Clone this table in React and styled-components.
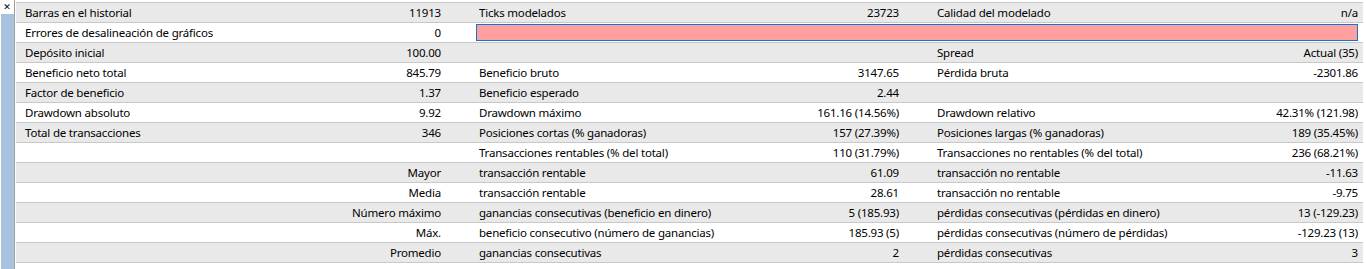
import React from 'react';
import styled, { createGlobalStyle } from 'styled-components';

const GlobalStyle = createGlobalStyle`
  html, body { margin: 0; padding: 0; background: #ffffff; }
  body { font-family: "Noto Sans", "Open Sans", sans-serif; }
`;

const Window = styled.div`
  display: flex;
  width: 1366px;
  height: 269px;
  overflow: hidden;
  background: #ffffff;
`;

const Side = styled.div`
  display: flex;
  flex-direction: column;
  width: 14px;
  flex: none;
  border-right: 1px solid #a0a0a0;
`;

const Close = styled.div`
  height: 14px;
  display: flex;
  align-items: center;
  justify-content: center;
  font-family: "DejaVu Sans", sans-serif;
  font-weight: bold;
  font-size: 9px;
  color: #000;
  line-height: 1;
`;

const Strip = styled.div`
  flex: 1;
  margin-left: 1px;
  background: #a8c3df;
`;

const Report = styled.div`
  flex: none;
  width: 1347px;
  margin-left: 1px;
  padding-top: 2px;
`;

const Row = styled.div`
  display: grid;
  grid-template-columns: 234px 224px 226px 232px 238px 192px;
  height: 19px;
  border-top: 1px solid #c8c8c8;
  background: ${p => (p.$alt ? '#e9e9e9' : '#ffffff')};
  &:last-child { border-bottom: 1px solid #c8c8c8; }
  font-size: 11.5px;
  letter-spacing: -0.2px;
  color: #000;
  align-items: center;
`;

const Label = styled.div`
  padding-left: ${p => p.$pad || 5}px;
  white-space: nowrap;
  overflow: visible;
`;

const Value = styled.div`
  text-align: right;
  white-space: nowrap;
  padding-right: ${p => p.$pad}px;
`;

const Warn = styled.div`
  grid-column: 3 / 7;
  height: 15px;
  margin: 0 4px 0 2px;
  background: #ff9f9f;
  border: 1px solid #0a78d4;
`;

const rows = [
  ['Barras en el historial', '11913', 'Ticks modelados', '23723', 'Calidad del modelado', 'n/a'],
  ['Errores de desalineación de gráficos', '0', null],
  ['Depósito inicial', '100.00', '', '', 'Spread', 'Actual (35)'],
  ['Beneficio neto total', '845.79', 'Beneficio bruto', '3147.65', 'Pérdida bruta', '-2301.86'],
  ['Factor de beneficio', '1.37', 'Beneficio esperado', '2.44', '', ''],
  ['Drawdown absoluto', '9.92', 'Drawdown máximo', '161.16 (14.56%)', 'Drawdown relativo', '42.31% (121.98)'],
  ['Total de transacciones', '346', 'Posiciones cortas (% ganadoras)', '157 (27.39%)', 'Posiciones largas (% ganadoras)', '189 (35.45%)'],
  ['', '', 'Transacciones rentables (% del total)', '110 (31.79%)', 'Transacciones no rentables (% del total)', '236 (68.21%)'],
  ['', 'Mayor', 'transacción rentable', '61.09', 'transacción no rentable', '-11.63'],
  ['', 'Media', 'transacción rentable', '28.61', 'transacción no rentable', '-9.75'],
  ['', 'Número máximo', 'ganancias consecutivas (beneficio en dinero)', '5 (185.93)', 'pérdidas consecutivas (pérdidas en dinero)', '13 (-129.23)'],
  ['', 'Máx.', 'beneficio consecutivo (número de ganancias)', '185.93 (5)', 'pérdidas consecutivas (número de pérdidas)', '-129.23 (13)'],
  ['', 'Promedio', 'ganancias consecutivas', '2', 'pérdidas consecutivas', '3'],
];

export default function App() {
  return (
    <Window>
      <GlobalStyle />
      <Side>
        <Close>✕</Close>
        <Strip />
      </Side>
      <Report>
        {rows.map((r, i) => (
          <Row key={i} $alt={i % 2 === 0}>
            <Label $pad={9}>{r[0]}</Label>
            <Value $pad={33}>{r[1]}</Value>
            {r[2] === null ? (
              <Warn />
            ) : (
              <>
                <Label>{r[2]}</Label>
                <Value $pad={33}>{r[3]}</Value>
                <Label>{r[4]}</Label>
                <Value $pad={4}>{r[5]}</Value>
              </>
            )}
          </Row>
        ))}
      </Report>
    </Window>
  );
}
